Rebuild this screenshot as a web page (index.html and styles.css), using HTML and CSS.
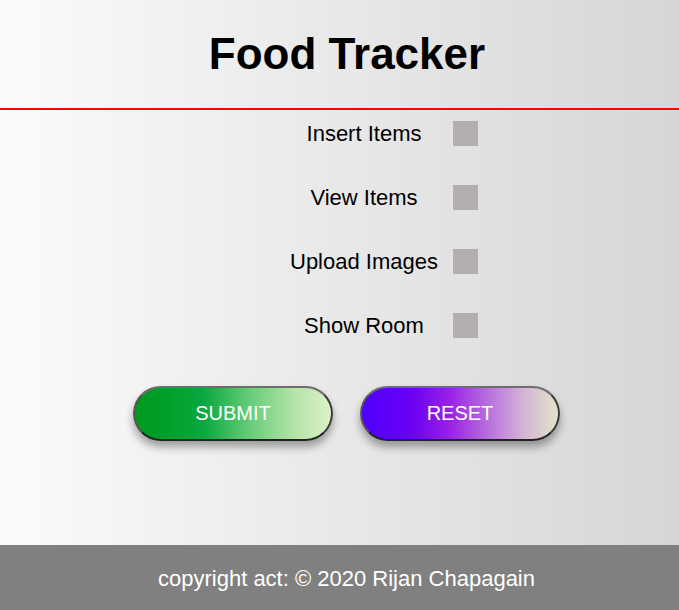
FILE: index.html
```html
<!DOCTYPE html>
<html lang="en">
<head>
<meta charset="utf-8">
<title>Food Tracker</title>
<link rel="stylesheet" href="styles.css">
</head>
<body>
<div class="page">
  <header class="header">
    <h1 class="title">Food Tracker</h1>
  </header>
  <form class="form">
    <div class="options">
      <label class="label" for="c1">Insert Items</label>
      <input class="box" type="checkbox" id="c1">
      <label class="label" for="c2">View Items</label>
      <input class="box" type="checkbox" id="c2">
      <label class="label" for="c3">Upload Images</label>
      <input class="box" type="checkbox" id="c3">
      <label class="label" for="c4">Show Room</label>
      <input class="box" type="checkbox" id="c4">
    </div>
    <div class="actions">
      <button type="button" class="btn btn-submit">SUBMIT</button>
      <button type="reset" class="btn btn-reset">RESET</button>
    </div>
  </form>
</div>
<footer class="footer">copyright act: © 2020 Rijan Chapagain</footer>
</body>
</html>
```
FILE: styles.css
```css
html, body {
  margin: 0;
  padding: 0;
}
body {
  width: 679px;
  height: 610px;
  display: flex;
  flex-direction: column;
  font-family: "Liberation Sans", Arial, sans-serif;
  color: #000;
  background: linear-gradient(to right, #fbfbfb, #d6d6d6);
}
.page {
  flex: 1;
}
.header {
  height: 108px;
  border-bottom: 2px solid #ff0000;
  display: flex;
  align-items: center;
  justify-content: center;
  padding-left: 15px;
}
.title {
  margin: 0;
  font-size: 44px;
  font-weight: bold;
  line-height: 1;
}
.form {
  padding-top: 11px;
}
.options {
  display: grid;
  grid-template-columns: 162px 25px;
  column-gap: 8px;
  row-gap: 39px;
  margin-left: 283px;
  align-items: center;
}
.label {
  text-align: center;
  font-size: 22px;
  line-height: 25px;
}
.box {
  appearance: none;
  -webkit-appearance: none;
  width: 25px;
  height: 25px;
  margin: 0;
  border: none;
  background: #b3afaf;
}
.actions {
  display: flex;
  justify-content: center;
  gap: 27px;
  margin-top: 48px;
  padding-left: 14px;
}
.btn {
  width: 200px;
  height: 55px;
  border-radius: 28px;
  border: 2px solid;
  border-color: #6e6e6e #3a3a3a #222 #555;
  color: #fff;
  font-family: "Liberation Sans", Arial, sans-serif;
  font-size: 20px;
  box-shadow: 0 6px 9px rgba(0, 0, 0, 0.35);
  padding: 0;
}
.btn-submit {
  background: linear-gradient(to right, #009a1e 0%, #009e28 15%, #0aa840 35%, #6cce7c 60%, #b6e4aa 82%, #dcf2c6 100%);
}
.btn-reset {
  background: linear-gradient(to right, #4f00ff 0%, #6a00f4 25%, #9a22e6 45%, #b872dc 65%, #d4b2d6 82%, #e2e4c8 100%);
}
.footer {
  height: 65px;
  box-sizing: border-box;
  padding-top: 2px;
  background: #808080;
  color: #fff;
  font-size: 22px;
  display: flex;
  align-items: center;
  justify-content: center;
  padding-left: 14px;
}
```
